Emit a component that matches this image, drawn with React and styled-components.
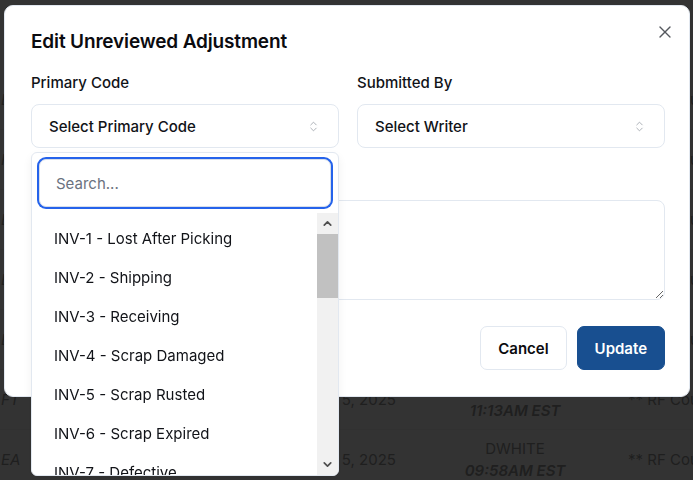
import React from 'react';
import styled, { createGlobalStyle } from 'styled-components';
import { X, ChevronsUpDown, ChevronUp, ChevronDown } from 'lucide-react';

const GlobalStyle = createGlobalStyle`
  * {
    box-sizing: border-box;
  }
  html, body {
    margin: 0;
    padding: 0;
    background: #ffffff;
    font-family: Inter, "Noto Sans", "Liberation Sans", sans-serif;
  }
`;

const Page = styled.div`
  position: relative;
  width: 693px;
  height: 480px;
  overflow: hidden;
  background: #ffffff;
`;

const Table = styled.div`
  display: flex;
  flex-direction: column;
  padding-top: 70px;
  color: #9c9c9c;
  font-size: 15px;
`;

const Row = styled.div`
  display: grid;
  grid-template-columns: 300px 130px 170px 93px;
  align-items: center;
  height: 60px;
  border-bottom: 1px solid #f2f2f2;
  white-space: nowrap;
  overflow: hidden;
`;

const Unit = styled.div`
  font-style: italic;
  padding-left: 1px;
`;

const DateCell = styled.div`
  padding-left: 10px;
`;

const WhoCell = styled.div`
  display: flex;
  flex-direction: column;
  align-items: center;
  line-height: 22px;
`;

const Time = styled.span`
  font-style: italic;
  font-weight: 600;
`;

const NoteCell = styled.div`
  padding-left: 28px;
  overflow: hidden;
`;

const Overlay = styled.div`
  position: fixed;
  inset: 0;
  background: rgba(0, 0, 0, 0.8);
`;

const Dialog = styled.div`
  position: fixed;
  left: 4px;
  top: 5px;
  width: 686px;
  height: 392px;
  background: #ffffff;
  border: 1px solid #e2e8f0;
  border-radius: 9px;
  padding: 22px 24px 0 26px;
  display: flex;
  flex-direction: column;
`;

const Title = styled.h2`
  margin: 0;
  font-size: 19px;
  line-height: 28px;
  font-weight: 600;
  letter-spacing: -0.15px;
  color: #0b0b0f;
`;

const CloseButton = styled.button`
  position: absolute;
  top: 14px;
  right: 12px;
  width: 24px;
  height: 24px;
  padding: 0;
  border: none;
  background: none;
  color: #55585e;
  display: flex;
  align-items: center;
  justify-content: center;
`;

const Form = styled.div`
  display: flex;
  flex-direction: column;
  gap: 20px;
  margin-top: 16px;
`;

const FieldRow = styled.div`
  display: grid;
  grid-template-columns: 1fr 1fr;
  gap: 18px;
`;

const Field = styled.div`
  position: relative;
  display: flex;
  flex-direction: column;
  gap: 10px;
`;

const Label = styled.label`
  font-size: 15px;
  line-height: 22px;
  font-weight: 500;
  color: #111318;
`;

const Trigger = styled.div`
  height: 44px;
  border: 1px solid #e2e8f0;
  border-radius: 8px;
  padding: 0 18px 0 17px;
  display: flex;
  align-items: center;
  justify-content: space-between;
  font-size: 15px;
  font-weight: 500;
  color: #111318;
  svg {
    color: #9aa0a8;
  }
`;

const TextArea = styled.textarea`
  display: block;
  width: 100%;
  height: 100px;
  border: 1px solid #e2e8f0;
  border-radius: 8px;
  padding: 10px 16px;
  font-family: inherit;
  font-size: 15px;
  resize: vertical;
  outline: none;
`;

const Actions = styled.div`
  display: flex;
  justify-content: flex-end;
  gap: 10px;
  margin-top: 26px;
`;

const Button = styled.button`
  height: 44px;
  padding: 0 17px;
  border-radius: 7px;
  font-family: inherit;
  font-size: 15px;
  font-weight: 600;
  border: 1px solid ${(p) => (p.$primary ? '#184f90' : '#e2e8f0')};
  background: ${(p) => (p.$primary ? '#184f90' : '#ffffff')};
  color: ${(p) => (p.$primary ? '#ffffff' : '#0b0b0f')};
`;

const Popover = styled.div`
  position: absolute;
  left: 0;
  top: calc(100% + 4px);
  width: 100%;
  height: 324px;
  background: #ffffff;
  border: 1px solid #e2e8f0;
  border-radius: 6px;
  box-shadow: 0 4px 10px rgba(0, 0, 0, 0.06);
  display: flex;
  flex-direction: column;
  overflow: hidden;
  z-index: 2;
`;

const SearchBox = styled.div`
  padding: 6px 7px 6px 7px;
`;

const SearchInput = styled.input`
  display: block;
  width: 100%;
  height: 48px;
  border: 1px solid #d7deea;
  border-radius: 7px;
  box-shadow: 0 0 0 2px #2563eb;
  padding: 0 16px;
  font-family: inherit;
  font-size: 15px;
  color: #111318;
  outline: none;
  &::placeholder {
    color: #6b7280;
  }
`;

const ListArea = styled.div`
  flex: 1;
  display: flex;
  min-height: 0;
`;

const Options = styled.ul`
  flex: 1;
  margin: 0;
  padding: 6px 0 0 0;
  list-style: none;
  overflow: hidden;
`;

const Option = styled.li`
  height: 39px;
  display: flex;
  align-items: center;
  padding-left: 22px;
  font-size: 15px;
  color: #111318;
  white-space: nowrap;
`;

const Scrollbar = styled.div`
  width: 21px;
  background: #f1f1f1;
  display: flex;
  flex-direction: column;
`;

const ScrollArrow = styled.div`
  height: 21px;
  display: flex;
  align-items: center;
  justify-content: center;
  color: #505050;
`;

const Thumb = styled.div`
  height: 64px;
  background: #c1c1c1;
`;

const Track = styled.div`
  flex: 1;
`;

const codes = [
  'INV-1 - Lost After Picking',
  'INV-2 - Shipping',
  'INV-3 - Receiving',
  'INV-4 - Scrap Damaged',
  'INV-5 - Scrap Rusted',
  'INV-6 - Scrap Expired',
  'INV-7 - Defective',
  'INV-8 - Cycle Count',
];

const rows = [
  { unit: 'EA', date: 'Mar 6, 2025', user: 'JSMITH', time: '02:41PM EST', note: '** RF Count' },
  { unit: 'FT', date: 'Mar 6, 2025', user: 'MLOPEZ', time: '01:22PM EST', note: '** RF Count' },
  { unit: 'EA', date: 'Mar 6, 2025', user: 'DWHITE', time: '12:05PM EST', note: '** RF Count' },
  { unit: 'EA', date: 'Mar 5, 2025', user: 'KBROWN', time: '03:30PM EST', note: '** RF Count' },
  { unit: 'EA', date: 'Mar 5, 2025', user: 'JSMITH', time: '02:17PM EST', note: '** RF Count' },
  { unit: 'FT', date: 'Mar 5, 2025', user: 'MLOPEZ', time: '11:13AM EST', note: '** RF Count' },
  { unit: 'EA', date: 'Mar 5, 2025', user: 'DWHITE', time: '09:58AM EST', note: '** RF Count' },
];

export default function App() {
  return (
    <Page>
      <GlobalStyle />
      <Table>
        {rows.map((r, i) => (
          <Row key={i}>
            <Unit>{r.unit}</Unit>
            <DateCell>{r.date}</DateCell>
            <WhoCell>
              <span>{r.user}</span>
              <Time>{r.time}</Time>
            </WhoCell>
            <NoteCell>{r.note}</NoteCell>
          </Row>
        ))}
      </Table>
      <Overlay />
      <Dialog>
        <Title>Edit Unreviewed Adjustment</Title>
        <CloseButton aria-label="Close">
          <X size={20} strokeWidth={1.6} />
        </CloseButton>
        <Form>
          <FieldRow>
            <Field>
              <Label>Primary Code</Label>
              <Trigger>
                <span>Select Primary Code</span>
                <ChevronsUpDown size={13} strokeWidth={1.5} />
              </Trigger>
              <Popover>
                <SearchBox>
                  <SearchInput placeholder="Search..." />
                </SearchBox>
                <ListArea>
                  <Options>
                    {codes.map((c) => (
                      <Option key={c}>{c}</Option>
                    ))}
                  </Options>
                  <Scrollbar>
                    <ScrollArrow>
                      <ChevronUp size={13} strokeWidth={3.2} />
                    </ScrollArrow>
                    <Thumb />
                    <Track />
                    <ScrollArrow>
                      <ChevronDown size={13} strokeWidth={3.2} />
                    </ScrollArrow>
                  </Scrollbar>
                </ListArea>
              </Popover>
            </Field>
            <Field>
              <Label>Submitted By</Label>
              <Trigger>
                <span>Select Writer</span>
                <ChevronsUpDown size={13} strokeWidth={1.5} />
              </Trigger>
            </Field>
          </FieldRow>
          <Field>
            <Label>Notes</Label>
            <TextArea />
          </Field>
        </Form>
        <Actions>
          <Button>Cancel</Button>
          <Button $primary>Update</Button>
        </Actions>
      </Dialog>
    </Page>
  );
}
